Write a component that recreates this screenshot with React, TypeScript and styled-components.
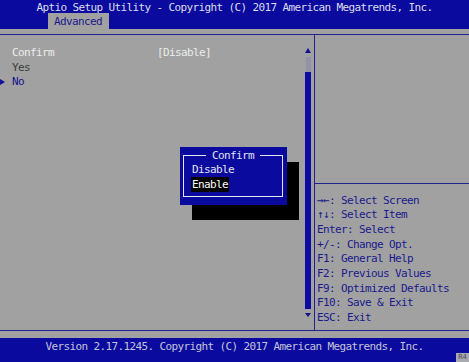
import React from 'react'
import styled, { createGlobalStyle } from 'styled-components';

const BLUE = '#0a0a9e';
const GREY = '#a1a1a1';
const LINE = '#22228c';

const GlobalStyle = createGlobalStyle`
  html, body {
    margin: 0;
    padding: 0;
    background: ${GREY};
  }
  body {
    font-family: "DejaVu Sans Mono", "Liberation Mono", monospace;
    font-size: 11px;
    letter-spacing: -0.62px;
  }
`;

const helpLines = [
  '→←: Select Screen',
  '↑↓: Select Item',
  'Enter: Select',
  '+/-: Change Opt.',
  'F1: General Help',
  'F2: Previous Values',
  'F9: Optimized Defaults',
  'F10: Save & Exit',
  'ESC: Exit',
];

const App = () => {
  return (
    <Screen>
      <GlobalStyle />
      <Header>
        <Title>Aptio Setup Utility - Copyright (C) 2017 American Megatrends, Inc.</Title>
        <Tabs>
          <Tab>Advanced</Tab>
        </Tabs>
      </Header>
      <Gap height={5} />
      <HLine />
      <Main>
        <LeftPanel>
          <Settings>
            <Row>
              <Label color="#ececec">Confirm</Label>
              <Value>[Disable]</Value>
            </Row>
            <Row>
              <Label color="#3c3c3c">Yes</Label>
            </Row>
            <Row>
              <Pointer>
                <svg width="5" height="6" viewBox="0 0 5 6">
                  <path d="M0 0 L5 3 L0 6 Z" fill="#12129a" />
                </svg>
              </Pointer>
              <Label color="#14148c">No</Label>
            </Row>
          </Settings>
          <ScrollBar>
            <svg width="6" height="5" viewBox="0 0 6 5">
              <path d="M3 0 L6 5 L0 5 Z" fill="#10108a" />
            </svg>
            <Dotted />
            <Thumb />
            <svg width="6" height="4" viewBox="0 0 6 4">
              <path d="M0 0 L6 0 L3 4 Z" fill="#10108a" />
            </svg>
          </ScrollBar>

          <Dialog>
            <Frame>
              <Legend><span>Confirm</span></Legend>
              <Option>Disable</Option>
              <Option selected>Enable</Option>
            </Frame>
          </Dialog>
        </LeftPanel>
        <VLine />
        <RightPanel>
          <HelpTop />
          <HLine />
          <HelpList>
            {helpLines.map((l) => (
              <HelpItem key={l}>{l}</HelpItem>
            ))}
          </HelpList>
        </RightPanel>
      </Main>
      <HLine />
      <Gap height={7} />
      <Footer>
        Version 2.17.1245. Copyright (C) 2017 American Megatrends, Inc.
        <Badge>R4</Badge>
      </Footer>
    </Screen>
  )
}

export default App

const Screen = styled.div`
  width: 469px;
  height: 362px;
  display: flex;
  flex-direction: column;
  background: ${GREY};
  overflow: hidden;
`;

const Header = styled.div`
  height: 29px;
  background: ${BLUE};
  display: flex;
  flex-direction: column;
`;

const Title = styled.div`
  height: 13px;
  line-height: 16px;
  text-align: center;
  color: #dcdcea;
  white-space: nowrap;
`;

const Tabs = styled.div`
  display: flex;
  padding-left: 48px;
  margin-top: auto;
`;

const Tab = styled.div`
  height: 16px;
  line-height: 17px;
  padding: 0 7px 0 6px;
  background: ${GREY};
  color: #1a1a8e;
`;

const Gap = styled.div<{ height: number }>`
  height: ${(p) => p.height}px;
  flex-shrink: 0;
`;

const HLine = styled.div`
  height: 1px;
  background: ${LINE};
  flex-shrink: 0;
`;

const Main = styled.div`
  height: 295px;
  display: flex;
`;

const LeftPanel = styled.div`
  width: 314px;
  display: flex;
  position: relative;
`;

const Settings = styled.div`
  flex: 1;
  padding-top: 11px;
  display: flex;
  flex-direction: column;
`;

const Row = styled.div`
  height: 14.7px;
  line-height: 14.7px;
  display: flex;
  align-items: center;
  position: relative;
  padding-left: 12px;
`;

const Label = styled.span<{ color: string }>`
  width: 145px;
  color: ${(p) => p.color};
`;

const Value = styled.span`
  color: #ececec;
`;

const Pointer = styled.span`
  position: absolute;
  left: 0;
  top: 4px;
  display: flex;
`;

const ScrollBar = styled.div`
  width: 6px;
  margin-right: 3px;
  padding-top: 13px;
  display: flex;
  flex-direction: column;
  align-items: center;
  gap: 4px;

  svg {
    display: block;
    flex-shrink: 0;
  }
`;

const Dotted = styled.div`
  width: 5px;
  height: 15px;
  margin-left: 1px;
  background-color: #b4b4b4;
  background-image: radial-gradient(#6a6a9a 0.6px, transparent 0.8px);
  background-size: 2px 2px;
`;

const Thumb = styled.div`
  width: 6px;
  height: 237px;
  margin-top: -4px;
  background: #0c0ca2;
`;

const Dialog = styled.div`
  position: absolute;
  left: 180px;
  top: 112px;
  width: 107px;
  height: 58px;
  box-sizing: border-box;
  padding: 8px 4px 8px 3px;
  background: ${BLUE};
  box-shadow: 12px 15px 0 #000;
`;

const Frame = styled.div`
  position: relative;
  height: 100%;
  box-sizing: border-box;
  border: 1px solid #e6e6f0;
  padding: 6px 0 0 7px;
  display: flex;
  flex-direction: column;
  align-items: flex-start;
`;

const Legend = styled.div`
  position: absolute;
  top: -8px;
  left: 0;
  right: 0;
  text-align: center;
  line-height: 15px;
  color: #e0e0ee;

  span {
    background: ${BLUE};
    padding: 0 6px;
  }
`;

const Option = styled.div<{ selected?: boolean }>`
  line-height: 15px;
  padding: 0 1px;
  color: ${(p) => (p.selected ? '#ffffff' : '#e4e4f0')};
  background: ${(p) => (p.selected ? '#000' : 'transparent')};
`;

const VLine = styled.div`
  width: 1px;
  background: ${LINE};
`;

const RightPanel = styled.div`
  flex: 1;
  display: flex;
  flex-direction: column;
`;

const HelpTop = styled.div`
  height: 148px;
`;

const HelpList = styled.div`
  padding: 9.5px 0 0 2px;
  display: flex;
  flex-direction: column;
`;

const HelpItem = styled.div`
  line-height: 14.7px;
  height: 14.7px;
  color: #1a1a8e;
  white-space: nowrap;
`;

const Footer = styled.div`
  flex: 1;
  background: ${BLUE};
  color: #c4c4d8;
  text-align: center;
  line-height: 14px;
  padding-top: 2px;
  white-space: nowrap;
  position: relative;
`;

const Badge = styled.div`
  position: absolute;
  right: 0;
  bottom: 0;
  width: 13px;
  height: 9px;
  background: #a9a9b0;
  color: #4a4a5a;
  font-size: 7px;
  line-height: 9px;
  letter-spacing: 0;
  text-align: center;
`;
